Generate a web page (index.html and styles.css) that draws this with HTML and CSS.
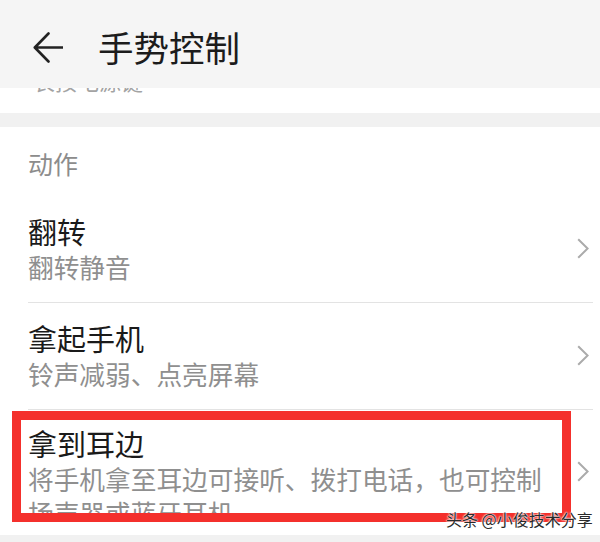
FILE: index.html
```html
<!DOCTYPE html>
<html lang="zh-CN">
<head>
<meta charset="utf-8">
<title>手势控制</title>
<link rel="stylesheet" href="styles.css">
</head>
<body>
<div class="page">
  <header class="topbar">
    <svg class="back" width="30" height="31" viewBox="0 0 30 31" aria-hidden="true">
      <path d="M2 15.5H30M15.5 1.5L1.8 15.5L15.5 29.5" fill="none" stroke="#222" stroke-width="2.6" stroke-linecap="round" stroke-linejoin="round"/>
    </svg>
    <h1 class="title">手势控制</h1>
  </header>
  <div class="peek"><span class="peek-text">长按电源键</span></div>
  <div class="gap"></div>
  <section class="card">
    <div class="section-label">动作</div>
    <div class="row">
      <div class="row-text">
        <div class="row-title">翻转</div>
        <div class="row-sub">翻转静音</div>
      </div>
      <svg class="chev" width="12" height="21" viewBox="0 0 12 21" aria-hidden="true"><path d="M1.2 1.2L10.6 10.5L1.2 19.8" fill="none" stroke="#ababab" stroke-width="2"/></svg>
    </div>
    <div class="divider"></div>
    <div class="row">
      <div class="row-text">
        <div class="row-title">拿起手机</div>
        <div class="row-sub">铃声减弱、点亮屏幕</div>
      </div>
      <svg class="chev" width="12" height="21" viewBox="0 0 12 21" aria-hidden="true"><path d="M1.2 1.2L10.6 10.5L1.2 19.8" fill="none" stroke="#ababab" stroke-width="2"/></svg>
    </div>
    <div class="divider"></div>
    <div class="row row-last">
      <div class="row-text">
        <div class="row-title row-title-last">拿到耳边</div>
        <div class="row-sub row-sub-multi">将手机拿至耳边可接听、拨打电话，也可控制扬声器或蓝牙耳机</div>
      </div>
      <svg class="chev" width="12" height="21" viewBox="0 0 12 21" aria-hidden="true"><path d="M1.2 1.2L10.6 10.5L1.2 19.8" fill="none" stroke="#ababab" stroke-width="2"/></svg>
      <div class="highlight"></div>
      <div class="watermark">头条 @小俊技术分享</div>
    </div>
  </section>
</div>
</body>
</html>
```

FILE: styles.css
```css
html, body {
  margin: 0;
  padding: 0;
}
body {
  background: #f1f1f1;
  font-family: "Noto Sans CJK SC", "Noto Sans", "Liberation Sans", sans-serif;
}
.page {
  width: 600px;
  height: 542px;
  overflow: hidden;
  background: #f1f1f1;
}
.topbar {
  height: 88px;
  box-sizing: border-box;
  padding: 6px 0 0 33px;
  background: #f5f5f5;
  display: flex;
  align-items: center;
}
.back {
  display: block;
  flex: none;
}
.title {
  margin: 0 0 0 35px;
  font-size: 35.5px;
  line-height: 44px;
  font-weight: 400;
  color: #1c1c1c;
}
.peek {
  height: 25px;
  background: #fff;
  overflow: hidden;
  padding-left: 33px;
}
.peek-text {
  display: block;
  margin-top: -20px;
  font-size: 22px;
  line-height: 24px;
  color: #a3a3a3;
}
.gap {
  height: 14px;
}
.card {
  background: #fff;
  height: 408px;
  overflow: hidden;
}
.section-label {
  padding: 19px 0 16px 28px;
  font-size: 25px;
  line-height: 34px;
  color: #8c8c8c;
}
.row {
  display: flex;
  align-items: center;
  padding: 16px 11px 18px 28px;
  position: relative;
}
.row-text {
  flex: 1;
  min-width: 0;
}
.row-title {
  font-size: 29px;
  line-height: 38px;
  color: #1a1a1a;
}
.row-title-last {
  line-height: 37px;
}
.row-sub {
  margin-top: 0;
  font-size: 25.7px;
  line-height: 34px;
  color: #8f8f8f;
}
.row-sub-multi {
  width: 522px;
  height: 57px;
  overflow: hidden;
}
.row-last {
  padding-top: 15px;
  padding-bottom: 0;
  height: 124px;
  box-sizing: border-box;
  align-items: flex-start;
}
.row-last .chev {
  margin-top: 36px;
}
.chev {
  display: block;
  flex: none;
  margin-left: 14px;
}
.divider {
  height: 1px;
  margin: 0 7px 0 28px;
  background: #e3e3e3;
}
.highlight {
  position: absolute;
  left: 12px;
  top: 1px;
  width: 559px;
  height: 111px;
  box-sizing: border-box;
  border: 9px solid #f4302c;
}
.watermark {
  position: absolute;
  left: 446px;
  top: 101px;
  font-size: 16px;
  line-height: 17px;
  color: #2a2a2a;
  white-space: nowrap;
  text-shadow: 0 0 2px #fff, 0 0 2px #fff, 0 0 1px #fff;
}
```
